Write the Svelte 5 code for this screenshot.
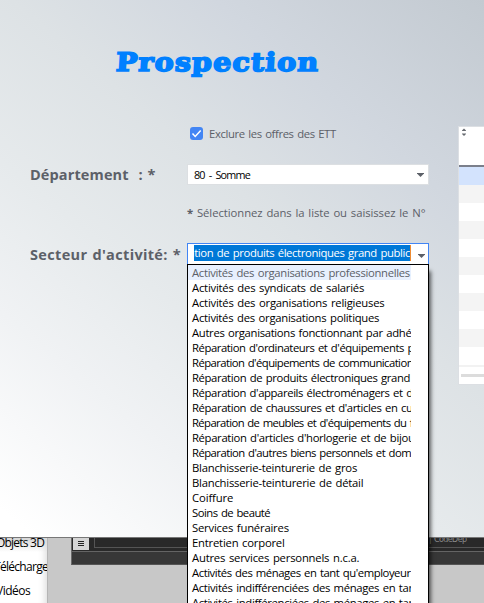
<script>
  const activities = [
    ['Activités des organisations professionnelles', 218],
    ['Activités des syndicats de salariés', 172],
    ['Activités des organisations religieuses', 192],
    ['Activités des organisations politiques', 187],
    ['Autres organisations fonctionnant par adhé', 219],
    ["Réparation d'ordinateurs et d'équipements p", 222],
    ["Réparation d'équipements de communication", 221],
    ['Réparation de produits électroniques grand', 218],
    ["Réparation d'appareils électroménagers et d", 221],
    ["Réparation de chaussures et d'articles en cu", 221],
    ["Réparation de meubles et d'équipements du f", 221],
    ["Réparation d'articles d'horlogerie et de bijou", 222],
    ["Réparation d'autres biens personnels et dom", 219],
    ['Blanchisserie-teinturerie de gros', 165],
    ['Blanchisserie-teinturerie de détail', 171],
    ['Coiffure', 41],
    ['Soins de beauté', 78],
    ['Services funéraires', 97],
    ['Entretien corporel', 93],
    ['Autres services personnels n.c.a.', 167],
    ["Activités des ménages en tant qu'employeur", 219],
    ['Activités indifférenciées des ménages en tan', 223],
    ['Activités indifférenciées des ménages en tan', 223]
  ];
  const rows = Array.from({ length: 11 }, (_, i) => i);

  function fit(node, width) {
    const n = node.textContent.length;
    const natural = node.offsetWidth;
    node.style.letterSpacing = (width - natural) / n + 'px';
  }
</script>

<div class="screen">
  <main class="window">
    <section class="form">
      <h1><span use:fit={182}>Prospection</span></h1>
      <label class="check">
        <svg width="13" height="13" viewBox="0 0 13 13"><rect width="13" height="13" rx="3" fill="#4285f4" /><path d="M2.5 6.5 5.2 9.4 10.7 3.6" fill="none" stroke="#fff" stroke-width="1.5" /></svg>
        <span use:fit={127}>Exclure les offres des ETT</span>
      </label>
      <div class="row dept">
        <div class="label"><b use:fit={126}>Département&nbsp; : *</b></div>
        <div class="select"><span class="value" use:fit={56}>80 - Somme</span><svg class="arrow" width="7" height="4" viewBox="0 0 7 4"><path d="M0 0H7V.5L3.5 4 0 .5Z" fill="#5c6068" /></svg></div>
      </div>
      <p class="hint"><span use:fit={238}><strong>*</strong> Sélectionnez dans la liste ou saisissez le N°</span></p>
      <div class="row sector">
        <div class="label"><b use:fit={151}>Secteur d'activité: *</b></div>
        <div class="select active">
          <div class="selected"><span use:fit={222}>ation de produits électroniques grand public</span></div>
          <svg class="arrow" width="7" height="4" viewBox="0 0 7 4"><path d="M0 0H7V.5L3.5 4 0 .5Z" fill="#5c6068" /></svg>
        </div>
      </div>
    </section>
    <aside class="table">
      <div class="thead"><svg width="4" height="8" viewBox="0 0 4 8"><path d="M0 2.5 2 .5 4 2.5V3H0ZM0 5.5H4V6L2 8 0 6Z" fill="#666a70" /></svg></div>
      {#each rows as i}<div class="tr" class:current={i === 0} class:odd={i % 2 === 1}></div>{/each}
      <div class="tail"></div>
      <div class="scroll"></div>
    </aside>
  </main>
  <div class="behind">
    <nav>
      <div><span use:fit={48}>Objets 3D</span></div>
      <div><span use:fit={54}>Télécharge</span></div>
      <div><span use:fit={34}>Vidéos</span></div>
    </nav>
    <div class="editor">
      <div class="tools">
        <div class="burger"><i></i><i></i><i></i></div>
        <div class="field"><span>| CodeDep</span></div>
      </div>
      <div class="strip"></div>
    </div>
  </div>
  <ul class="menu">
    {#each activities as [name, width], i}
      <li class:hover={i === 0}><span use:fit={width}>{name}</span></li>
    {/each}
  </ul>
</div>

<style>
  :global(body) { margin: 0; overflow: hidden; }
  .screen { position: relative; width: 484px; height: 603px; overflow: hidden; font: 11.3px/15px "Open Sans", "Noto Sans", sans-serif; word-spacing: 1px; color: #000; }
  .screen * { box-sizing: border-box; }
  span, b { display: inline-block; white-space: pre; }
  .window { height: 537px; display: flex; align-items: flex-start; background: linear-gradient(220deg, #c3cad1 0%, #d1d7df 24%, #dde2e5 42%, #e6eaec 60%, #f0f2f4 76%, #fff 97%); }
  .form { width: 458px; height: 537px; flex: none; color: #5c6068; }
  h1 { margin: 0; padding: 43px 0 0 116px; height: 127px; font: bold 25.5px/38px "DejaVu Serif", serif; color: #0080ff; -webkit-text-stroke: 1.7px #0080ff; }
  h1 span { transform: scaleX(1.12) skewX(-3deg); transform-origin: left center; }
  .check { display: flex; align-items: center; height: 13px; padding-left: 190px; gap: 6px; }
  .row { display: flex; align-items: center; padding-left: 30px; }
  .label { width: 157px; flex: none; font-size: 14.5px; line-height: 20px; padding-top: 1px; }
  .dept { margin-top: 24px; }
  .select { display: flex; align-items: center; justify-content: space-between; width: 242px; flex: none; height: 21px; padding: 0 4px 0 6px; background: #fff; border: 1px solid #dcdfe2; color: #000; }
  .value { margin-top: -1px; font-size: 10.8px; word-spacing: 2px; }
  .arrow { flex: none; }
  .hint { height: 15px; margin: 20px 0 0 187px; }
  .sector { margin-top: 23px; }
  .active { height: 22px; border-color: #4285f4; padding: 0 3px 0 6px; }
  .active .arrow { margin-top: 3px; }
  .selected { width: 217px; height: 16px; overflow: hidden; display: flex; justify-content: flex-end; background: #0078d7; color: #fff; border-right: 1px solid #ed8b32; margin-top: -2px; }
  .selected span { flex: none; }
  .table { margin-top: 126px; width: 26px; height: 259px; background: #fff; border: solid #dcdfe3; border-width: 1px 0 1px 1px; overflow: hidden; }
  .thead { height: 40px; border-bottom: 2px solid #7b7f8b; padding: 1px 0 0 3px; display: flex; }
  /* Row stripes: even ones stay white */
  .tr { height: 18px; }
  .tr.odd { background: #f4f4f4; }
  .tr.current { background: #d3e3fd; }
  .tail { height: 2px; background: #f2f2f2; }
  .scroll { height: 3px; margin: 7px 0 0 2px; background: #dcdcdc; }
  .behind { height: 66px; display: flex; background: #c8c8c8; border-top: 1px solid #777; }
  nav { width: 48px; height: 66px; flex: none; overflow: hidden; background: linear-gradient(#d5d5d5, #fff 14px); border-right: 1px solid #b5b5b5; font-size: 12px; word-spacing: 0; box-shadow: inset -7px 0 7px -5px #ddd; }
  nav div { height: 24px; line-height: 10px; }
  nav span { margin-left: -4px; }
  nav div:nth-child(2) span { margin-left: -6px; }
  .editor { flex: 1; height: 27px; margin-left: 23px; background: #373737; border-left: 1px solid #6a6a6a; border-bottom: 1px solid #555; }
  .tools { height: 14px; display: flex; border-bottom: 1px solid #646464; padding-left: 1px; background: #292929; }
  .burger { width: 16px; height: 12px; flex: none; background: #d5d5d5; padding: 3px 5px; }
  .burger i { display: block; height: 1px; margin-bottom: 1px; background: #222; }
  .field { flex: 1; min-width: 0; height: 10px; margin-left: 5px; border: solid #555; border-width: 0 0 1px 1px; overflow: hidden; padding-left: 334px; color: #888; font: 8px/4px "DejaVu Sans", sans-serif; letter-spacing: -0.6px; white-space: nowrap; }
  .menu { position: absolute; left: 187px; top: 264px; width: 242px; height: 350px; margin: 0; padding: 0 17px 0 0; border: 1px solid #000; background: #fff; list-style: none; box-shadow: 3px 6px 4px -1px rgba(0,0,0,.6); }
  .menu li { height: 15px; padding-left: 4px; overflow: hidden; white-space: nowrap; }
  .menu li.hover { background: #e8f0fe; color: #5c6068; }
</style>
